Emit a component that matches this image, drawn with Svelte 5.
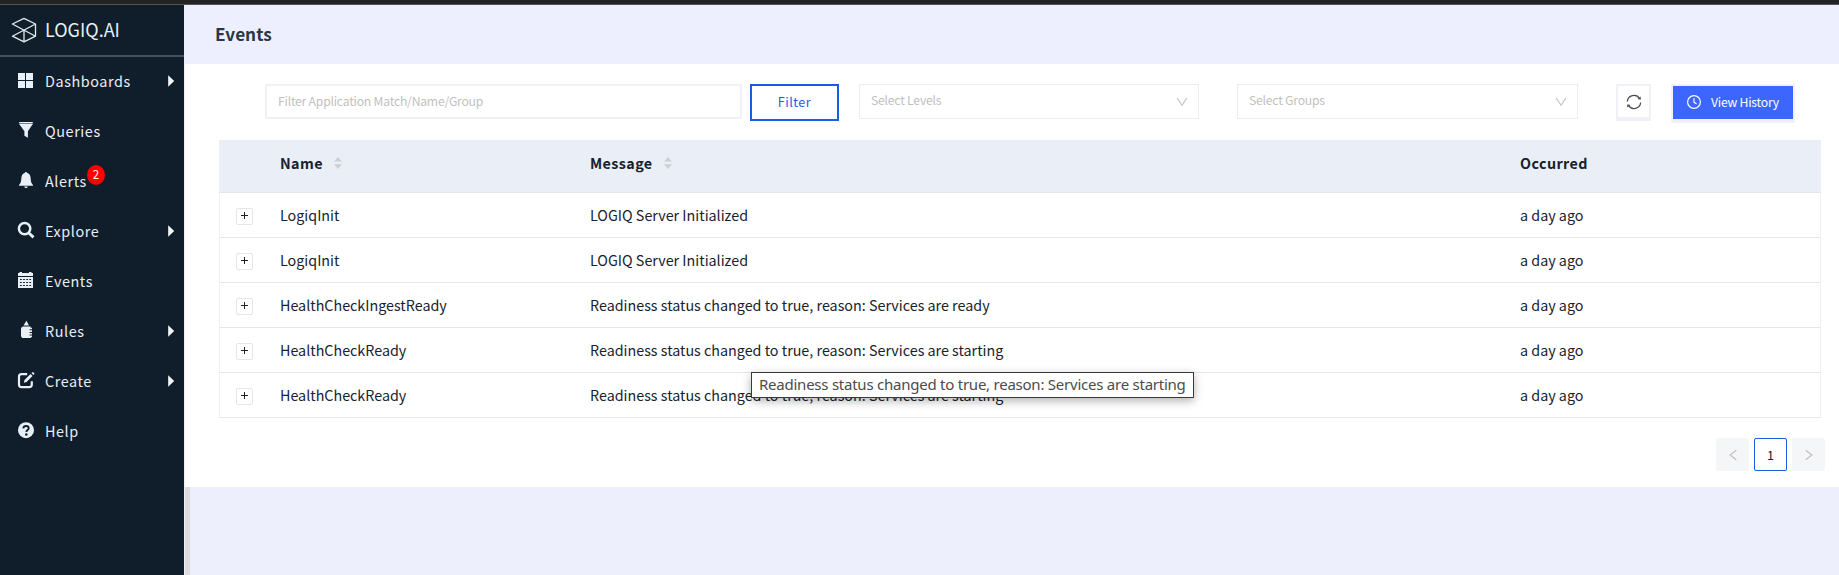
<script>
  const menu = [
    { icon: 'grid', label: 'Dashboards', sub: true },
    { icon: 'filter', label: 'Queries' },
    { icon: 'bell', label: 'Alerts', badge: 2 },
    { icon: 'search', label: 'Explore', sub: true },
    { icon: 'calendar', label: 'Events' },
    { icon: 'rules', label: 'Rules', sub: true },
    { icon: 'create', label: 'Create', sub: true },
    { icon: 'help', label: 'Help' }
  ];
  const rows = [
    { name: 'LogiqInit', message: 'LOGIQ Server Initialized' },
    { name: 'LogiqInit', message: 'LOGIQ Server Initialized' },
    { name: 'HealthCheckIngestReady', message: 'Readiness status changed to true, reason: Services are ready' },
    { name: 'HealthCheckReady', message: 'Readiness status changed to true, reason: Services are starting' },
    { name: 'HealthCheckReady', message: 'Readiness status changed to true, reason: Services are starting' }
  ];
</script>

{#snippet sorter()}
  <svg class="sorter" width="8" height="12" viewBox="0 0 8 12"><path d="M4 0 8 4.6H0zM0 7.2h8L4 12z" fill="#ccd0d4" /></svg>
{/snippet}

{#snippet chevron()}
  <svg width="12" height="10" viewBox="0 0 12 10"><path d="M1.2 1.2 6 8.3l4.8-7.1" fill="none" stroke="#c4c4c6" stroke-width="1.2" /></svg>
{/snippet}

<div class="app">
  <div class="topbar"></div>
  <div class="body">
    <aside>
      <div class="brand">
        <svg width="26" height="26" viewBox="0 0 26 26" fill="none" stroke="#e4e9ee" stroke-width="1.3" stroke-linejoin="round">
          <path d="M13 1.400 24.500 7v12.200L13 24.800 1.400 19.200 24.500 7M13 1.400 1.400 7 24.500 19.200M13 13v11.800" />
        </svg>
        <span>LOGIQ.AI</span>
      </div>
      <nav>
        {#each menu as item}
          <div class="item">
            <svg class="icon" width="18" height="18" viewBox="0 0 18 18" fill="#e9eff6">
              {#if item.icon === 'grid'}
                <path d="M1 1h7v7H1zM9 1h7v7H9zM1 9h7v7H1zM9 9h7v7H9z" />
              {:else if item.icon === 'filter'}
                <path d="M2.200 0h13.600v1.200H2.200z" />
                <path d="M2.200 2h13.600l-4.900 7.200v6.600l-3.500-2V9.200z" />
                <path d="M2.200 1.200h13.600v1.400H2.200z" opacity=".45" />
              {:else if item.icon === 'bell'}
                <path d="M9 0c.7 0 1.100.4 1.200 1C12.800 1.600 13.600 4 13.700 6.700c.1 3.200.8 4.600 2.300 6.300v.7H2V13c1.500-1.700 2.200-3.100 2.300-6.300.1-2.700.9-5.100 3.500-5.700C7.800.4 8.300 0 9 0zM7.400 14.400h3.200c0 1-.6 1.600-1.600 1.600s-1.600-.6-1.600-1.600z" />
              {:else if item.icon === 'search'}
                <circle cx="7.600" cy="6.600" r="5.700" fill="none" stroke="#e9eff6" stroke-width="2.500" />
                <path d="m11.600 10.700 4.900 4.700" stroke="#e9eff6" stroke-width="2.900" />
              {:else if item.icon === 'calendar'}
                <path d="M1 1h1.500V0h2.500v1h7V0h2.500v1H16v3H1z" />
                <path fill-rule="evenodd" d="M1 5h15v11H1zM3 7v1h1.800V7zm3.100 0v1h1.800V7zm3.100 0v1H11V7zm3.100 0v1h1.800V7zM3 10v1h1.800v-1zm3.100 0v1h1.800v-1zm3.100 0v1H11v-1zm3.100 0v1h1.800v-1zM3 13v1h1.800v-1zm3.100 0v1h1.800v-1zm3.100 0v1H11v-1zm3.100 0v1h1.800v-1z" />
              {:else if item.icon === 'rules'}
                <path d="M9.400-1.300c.8 1.600 1.800 2.900 2.600 4.700H6.600c1-1.800 1.900-3.100 2.800-4.700z" />
                <path d="M6 4.600h7.600v1.200H15v1.400h-2.400v1H15v1.700h-2.400v1H15v1.700h-2.400v1H15v1.200l-1.400 1.200H5.200L4 14.200V7.400c0-1.600.6-2.400 2-2.800z" />
              {:else if item.icon === 'create'}
                <path d="M10.200 2.200H4.600C3 2.200 2 3.200 2 4.700v7.900c0 1.600 1 2.600 2.600 2.600h7.600c1.600 0 2.600-1 2.600-2.600V9.200" fill="none" stroke="#e9eff6" stroke-width="2.200" />
                <path d="m13.500 1.900 2 2-6 6.100-2.700.8.700-2.700zM14.400 1l1.500-1 1.700 1.600-1.100 1.400z" />
              {:else}
                <circle cx="9" cy="8.200" r="8" />
                <path d="M6.300 6.300C6.500 4.700 7.500 4 9 4c1.600 0 2.700.8 2.700 2.200 0 1.800-2.300 1.900-2.300 3.700" fill="none" stroke="#0f1e2a" stroke-width="1.900" />
                <circle cx="9.300" cy="12.500" r="1.300" fill="#0f1e2a" />
              {/if}
            </svg>
            <span class="label">{item.label}{#if item.badge}<b class="badge">{item.badge}</b>{/if}</span>
            {#if item.sub}
              <svg class="caret" width="7" height="12" viewBox="0 0 7 12"><path d="M.2.300 6.200 6 .2 11.700z" fill="#f4f7fa" /></svg>
            {/if}
          </div>
        {/each}
      </nav>
    </aside>
    <div class="main">
      <header><h1>Events</h1></header>
      <section>
        <div class="filters">
          <div class="box search">Filter Application Match/Name/Group</div>
          <div class="filter-btn">Filter</div>
          <div class="box select levels"><span>Select Levels</span>{@render chevron()}</div>
          <div class="box select groups"><span>Select Groups</span>{@render chevron()}</div>
          <div class="refresh">
            <svg width="16" height="16" viewBox="0 0 16 16" fill="none" stroke="#4c4c4e" stroke-width="1.300">
              <path d="M1.300 7.500a6.700 6.700 0 0 1 12.300-2.900M14.700 8.500a6.700 6.700 0 0 1-12.300 2.900" />
              <path d="m14.800 2.400-.1 3.400-3.100-.7zM1.200 13.600l.1-3.400 3.100.7z" fill="#4c4c4e" stroke="none" />
            </svg>
          </div>
          <div class="history">
            <svg width="14" height="14" viewBox="0 0 14 14" fill="none" stroke="#fff" stroke-width="1.200"><circle cx="7" cy="7" r="6.400" /><path d="M7 3.200v4.100l2.600 1.800" /></svg>
            <span>View History</span>
          </div>
        </div>
        <div class="table">
          <div class="row head">
            <span></span>
            <span>Name{@render sorter()}</span>
            <span>Message{@render sorter()}</span>
            <span>Occurred</span>
          </div>
          {#each rows as row}
            <div class="row">
              <span class="expand"><svg width="17" height="17" viewBox="0 0 17 17"><rect x=".5" y=".5" width="16" height="16" rx="1.500" fill="#fff" stroke="#e4e6e9" /><path d="M5 7.500h7M8.500 4v7" stroke="#222" stroke-width="1" /></svg></span>
              <span class="name">{row.name}</span>
              <span class="message">{row.message}</span>
              <span>a day ago</span>
            </div>
          {/each}
        </div>
        <div class="pages">
          <div class="page"><svg width="8" height="12" viewBox="0 0 8 12"><path d="M7.300 1.200 1.200 6l6.100 4.800" fill="none" stroke="#bfc1c4" stroke-width="1.200" /></svg></div>
          <div class="page current">1</div>
          <div class="page"><svg width="8" height="12" viewBox="0 0 8 12"><path d="M.7 1.200 6.800 6 .7 10.800" fill="none" stroke="#bfc1c4" stroke-width="1.200" /></svg></div>
        </div>
      </section>
      <div class="rest"></div>
    </div>
  </div>
  <div class="tooltip">Readiness status changed to true, reason: Services are starting</div>
</div>

<style>
  :global(body) { overflow: hidden; }
  .app {
    position: relative;
    width: 1839px;
    height: 575px;
    display: flex;
    flex-direction: column;
    box-sizing: border-box;
    font-family: "Noto Sans CJK SC", "Noto Sans", sans-serif;
    font-size: 14.4px;
    color: #17222d;
    white-space: nowrap;
    overflow: hidden;
  }
  .app :global(*) { box-sizing: border-box; }
  svg { display: block; flex: none; overflow: visible; }
  .topbar { height: 5px; background: #232323; border-bottom: 1px solid #555; flex: none; }
  .body { flex: 1; display: flex; background: #eeeffe; }
  aside { width: 184px; background: #0f1e2a; color: #e9eff6; }
  .brand {
    height: 52px;
    border-bottom: 2px solid #435059;
    display: flex;
    align-items: center;
    padding: 0 0 0 11px;
    gap: 8px;
    font-size: 18px;
    line-height: 24px;
  }
  .brand span { padding-bottom: 2px; }
  .item { height: 50px; display: flex; align-items: center; padding: 0 9px 2px 17px; letter-spacing: .58px; }
  .icon { margin-right: 10px; }
  .label { position: relative; flex: 1; line-height: 24px; }
  .badge {
    position: absolute;
    left: 42px;
    top: -4px;
    width: 18px;
    height: 20px;
    border-radius: 50%;
    background: #fe0000;
    color: #fff;
    font-size: 11.500px;
    font-weight: 400;
    line-height: 19px;
    text-align: center;
    letter-spacing: 0;
  }
  .main { flex: 1; margin-left: 1px; display: flex; flex-direction: column; }
  header { height: 59px; background: #eeeffe; padding: 0 0 1px 30px; display: flex; align-items: center; }
  h1 { margin: 0; font-size: 17.200px; font-weight: 700; color: #2a3744; line-height: 24px; }
  section { height: 423px; background: #fff; padding: 20px 14px 16px 34px; }
  .filters { display: flex; height: 56px; align-items: flex-start; padding-left: 46px; font-size: 12.200px; letter-spacing: -.22px; }
  .box { height: 35px; border: 1px solid #ededf0; color: #bfbfbf; line-height: 31px; }
  .search { width: 477px; border: 2px solid #f0f0f6; padding-left: 11px; line-height: 30px; }
  .filter-btn { width: 89px; height: 37px; margin-left: 8px; border: 2px solid #1b5ce6; color: #1b5ce6; font-size: 12.600px; line-height: 32px; text-align: center; letter-spacing: .5px; }
  .select { display: flex; align-items: center; justify-content: space-between; padding: 0 10px 0 11px; }
  .select span { padding-bottom: 2px; }
  .levels { width: 340px; margin-left: 20px; }
  .groups { width: 341px; margin-left: 38px; }
  .refresh { width: 35px; height: 37px; margin-left: 38px; border: 2px solid #f0f0f6; border-bottom-width: 4px; display: flex; align-items: center; justify-content: center; }
  .history { width: 124px; height: 39px; margin-left: 20px; border: 2px solid #f0f0f6; border-bottom-width: 4px; background: #3c66ff; background-clip: padding-box; color: #fff; display: flex; align-items: center; padding-left: 14px; gap: 10px; }
  .history svg { margin-bottom: 2px; }
  .history span { padding-bottom: 1px; }
  .table { width: 1602px; border: 1px solid #edf0f4; border-width: 0 1px; }
  .row { display: grid; grid-template-columns: 60px 310px 930px 1fr; height: 45px; align-items: center; border-bottom: 1px solid #e5e6e8; line-height: 44px; font-size: 14.320px; }
  .head { height: 53px; background: #eaeff7; font-weight: 700; letter-spacing: .4px; margin: 0 -1px; padding-left: 1px; }
  .head > span { display: flex; align-items: center; padding-bottom: 6px; line-height: 46px; }
  .sorter { margin-left: 11px; }
  .expand { padding: 2px 0 0 16px; }
  .pages { display: flex; justify-content: flex-end; gap: 5px; padding-top: 20px; font-size: 12.600px; }
  .page { width: 33px; height: 33px; border-radius: 2px; background: #f5f6f8; display: flex; align-items: center; justify-content: center; }
  .current { background: #fff; border: 1px solid #1b5ce6; }
  .rest { flex: 1; background: #eeeffd; border-left: 5px solid #ddd; }
  .tooltip {
    position: absolute;
    left: 751px;
    top: 372px;
    width: 443px;
    height: 26px;
    border: 1px solid #3a3a3a;
    background: #fff;
    color: #4b4b4b;
    font: 15px/23px "Noto Sans", sans-serif;
    letter-spacing: -.24px;
    padding-left: 7px;
    box-shadow: 0 3px 10px rgba(0, 0, 0, .3);
  }
</style>
